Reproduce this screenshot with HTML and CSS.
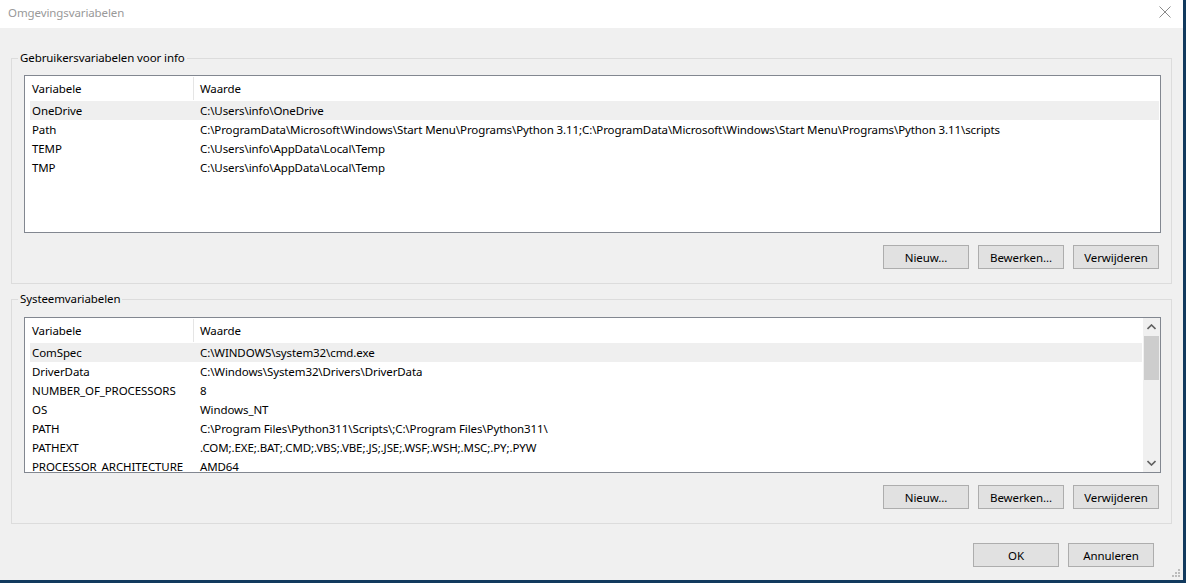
FILE: index.html
```html
<!DOCTYPE html>
<html lang="nl">
<head>
    <meta charset="UTF-8">
    <title>Omgevingsvariabelen</title>
    <link rel="stylesheet" href="styles.css">
</head>
<body>
    <div class="window">
        <div class="titlebar">
            <span class="title">Omgevingsvariabelen</span>
            <svg class="close" width="12" height="12" viewBox="0 0 12 12">
                <path d="M0.5 0.5 L11.5 11.5 M11.5 0.5 L0.5 11.5" stroke="#8a8a8a" stroke-width="1" fill="none"/>
            </svg>
        </div>

        <div class="content">
            <fieldset class="group group-user">
                <legend>Gebruikersvariabelen voor info</legend>
                <div class="listview list-user">
                    <div class="list-main">
                        <div class="list-header">
                            <div class="col-name">Variabele</div>
                            <div class="col-value">Waarde</div>
                        </div>
                        <div class="row selected"><span>OneDrive</span><span>C:\Users\info\OneDrive</span></div>
                        <div class="row"><span>Path</span><span>C:\ProgramData\Microsoft\Windows\Start Menu\Programs\Python 3.11;C:\ProgramData\Microsoft\Windows\Start Menu\Programs\Python 3.11\scripts</span></div>
                        <div class="row"><span>TEMP</span><span>C:\Users\info\AppData\Local\Temp</span></div>
                        <div class="row"><span>TMP</span><span>C:\Users\info\AppData\Local\Temp</span></div>
                    </div>
                </div>
                <div class="buttons">
                    <button>Nieuw...</button>
                    <button>Bewerken...</button>
                    <button>Verwijderen</button>
                </div>
            </fieldset>

            <fieldset class="group group-system">
                <legend>Systeemvariabelen</legend>
                <div class="listview list-system">
                    <div class="list-main">
                        <div class="list-header">
                            <div class="col-name">Variabele</div>
                            <div class="col-value">Waarde</div>
                        </div>
                        <div class="row selected"><span>ComSpec</span><span>C:\WINDOWS\system32\cmd.exe</span></div>
                        <div class="row"><span>DriverData</span><span>C:\Windows\System32\Drivers\DriverData</span></div>
                        <div class="row"><span>NUMBER_OF_PROCESSORS</span><span>8</span></div>
                        <div class="row"><span>OS</span><span>Windows_NT</span></div>
                        <div class="row"><span>PATH</span><span>C:\Program Files\Python311\Scripts\;C:\Program Files\Python311\</span></div>
                        <div class="row"><span>PATHEXT</span><span>.COM;.EXE;.BAT;.CMD;.VBS;.VBE;.JS;.JSE;.WSF;.WSH;.MSC;.PY;.PYW</span></div>
                        <div class="row"><span>PROCESSOR_ARCHITECTURE</span><span>AMD64</span></div>
                    </div>
                    <div class="scrollbar">
                        <svg class="arrow" width="9" height="6" viewBox="0 0 9 6">
                            <path d="M0.5 5 L4.5 1 L8.5 5" stroke="#606060" stroke-width="1.6" fill="none"/>
                        </svg>
                        <div class="track">
                            <div class="thumb"></div>
                        </div>
                        <svg class="arrow" width="9" height="6" viewBox="0 0 9 6">
                            <path d="M0.5 1 L4.5 5 L8.5 1" stroke="#606060" stroke-width="1.6" fill="none"/>
                        </svg>
                    </div>
                </div>
                <div class="buttons">
                    <button>Nieuw...</button>
                    <button>Bewerken...</button>
                    <button>Verwijderen</button>
                </div>
            </fieldset>

            <div class="footer">
                <button>OK</button>
                <button>Annuleren</button>
            </div>
        </div>

        <svg class="grip" width="8" height="8" viewBox="0 0 8 8">
            <rect x="6" y="0" width="2" height="2" fill="#bcbcbc"/>
            <rect x="3" y="3" width="2" height="2" fill="#bcbcbc"/>
            <rect x="6" y="3" width="2" height="2" fill="#bcbcbc"/>
            <rect x="0" y="6" width="2" height="2" fill="#bcbcbc"/>
            <rect x="3" y="6" width="2" height="2" fill="#bcbcbc"/>
            <rect x="6" y="6" width="2" height="2" fill="#bcbcbc"/>
        </svg>
    </div>
</body>
</html>
```

FILE: styles.css
```css
html {
    background: #123a5e;
}
body {
    margin: 0;
    font-family: "Noto Sans", "Open Sans", sans-serif;
    font-size: 11.5px;
    letter-spacing: -0.1px;
    line-height: 16px;
    color: #000;
}
.window {
    position: relative;
    width: 1183px;
    height: 580px;
    background: #f0f0f0;
    overflow: hidden;
}
.titlebar {
    height: 28px;
    box-sizing: border-box;
    background: #fff;
    padding: 5px 0 0 8px;
    display: flex;
    justify-content: space-between;
}
.title {
    color: #999;
}
.close {
    margin: 1px 12px 0 0;
}
.content {
    padding: 22px 11px 0 11px;
}
.group {
    width: 1161px;
    box-sizing: border-box;
    margin: 0;
    border: 1px solid #dcdcdc;
    padding: 9px 10px 14px 12px;
}
.group legend {
    margin-left: -6px;
    padding: 0 2px;
    line-height: 16px;
}
.group-system {
    margin-top: 7px;
    padding-top: 10px;
}
.listview {
    display: flex;
    background: #fff;
    border: 1px solid #828790;
    overflow: hidden;
}
.list-user {
    height: 158px;
    box-sizing: border-box;
}
.list-system {
    height: 156px;
    box-sizing: border-box;
}
.list-main {
    flex: 1;
    min-width: 0;
}
.list-header {
    display: flex;
    height: 25px;
    align-items: center;
    white-space: nowrap;
}
.col-name {
    width: 161px;
    padding-left: 7px;
    border-right: 1px solid #e5e5e5;
    height: 23px;
    line-height: 23px;
}
.col-value {
    padding-left: 6px;
}
.row {
    display: grid;
    grid-template-columns: 168px 1fr;
    height: 19px;
    line-height: 19px;
    margin: 0 1px 0 5px;
    padding-left: 2px;
    white-space: nowrap;
}
.row.selected {
    background: #efefef;
}
.buttons {
    display: flex;
    justify-content: flex-end;
    gap: 9px;
    margin: 12px 2px 0 0;
}
button {
    width: 86px;
    height: 24px;
    margin: 0;
    padding: 0;
    font-family: inherit;
    font-size: 11.5px;
    letter-spacing: -0.1px;
    color: #000;
    background: #e1e1e1;
    border: 1px solid #adadad;
}
.footer {
    display: flex;
    justify-content: flex-end;
    gap: 9px;
    margin-top: 19px;
    padding-right: 18px;
}
.scrollbar {
    width: 17px;
    background: #f0f0f0;
    display: flex;
    flex-direction: column;
    align-items: center;
}
.scrollbar .arrow {
    flex: none;
    margin: 6px 0;
}
.track {
    flex: 1;
    width: 100%;
}
.thumb {
    width: 15px;
    height: 44px;
    margin: 0 auto;
    background: #cdcdcd;
}
.grip {
    position: absolute;
    right: 3px;
    bottom: 3px;
}
```
